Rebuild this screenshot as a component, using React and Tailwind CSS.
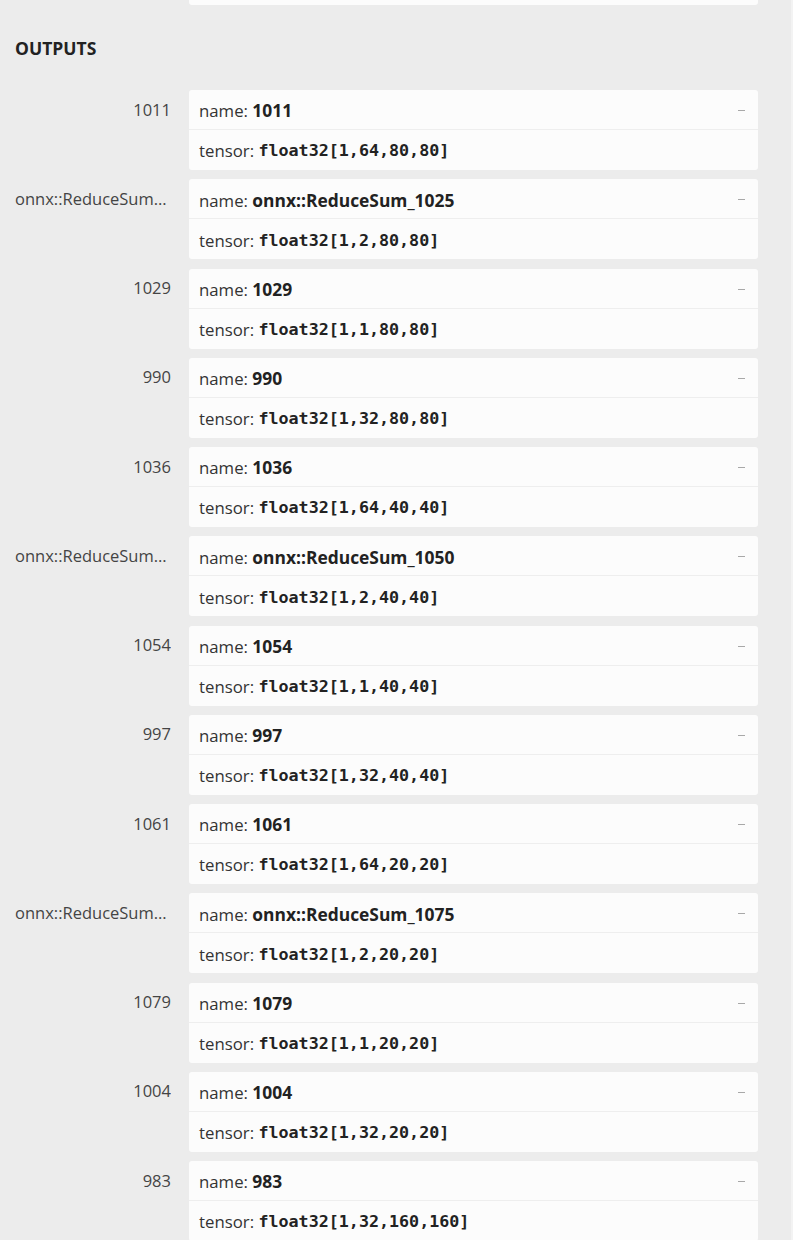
import React from 'react';

const outputs = [
  ['1011', '1011', 'float32[1,64,80,80]'],
  ['onnx::ReduceSum_1025', 'onnx::ReduceSum_1025', 'float32[1,2,80,80]'],
  ['1029', '1029', 'float32[1,1,80,80]'],
  ['990', '990', 'float32[1,32,80,80]'],
  ['1036', '1036', 'float32[1,64,40,40]'],
  ['onnx::ReduceSum_1050', 'onnx::ReduceSum_1050', 'float32[1,2,40,40]'],
  ['1054', '1054', 'float32[1,1,40,40]'],
  ['997', '997', 'float32[1,32,40,40]'],
  ['1061', '1061', 'float32[1,64,20,20]'],
  ['onnx::ReduceSum_1075', 'onnx::ReduceSum_1075', 'float32[1,2,20,20]'],
  ['1079', '1079', 'float32[1,1,20,20]'],
  ['1004', '1004', 'float32[1,32,20,20]'],
  ['983', '983', 'float32[1,32,160,160]'],
];

const sans = { fontFamily: '"Open Sans", "Noto Sans", sans-serif' };

function OutputRow({ label, name, tensor }) {
  return (
    <div className="flex items-start mb-[9.25px]">
      <div className="w-[156px] shrink-0 pl-[15px] h-10 flex items-center justify-end text-[16.5px] text-[#444] box-content">
        <span className="truncate block text-right">{label}</span>
      </div>
      <div className="ml-[18px] w-[569px] bg-[#fcfcfc] rounded-[3px] overflow-hidden">
        <div className="h-10 flex items-center justify-between pl-[10px] pr-[13px] pt-[2px] border-b border-[#eeeeee] text-[16.8px] text-[#333]">
          <div>
            name: <b className="text-[#222] font-bold text-[17.4px]">{name}</b>
          </div>
          <div className="w-[7px] h-px bg-[#a8a8a8]" />
        </div>
        <div className="h-10 flex items-center pl-[10px] pt-[2px] text-[16.8px] text-[#333]">
          tensor:&nbsp;
          <span className="font-bold text-[#222] text-[16.7px]" style={{ fontFamily: '"DejaVu Sans Mono", monospace' }}>
            {tensor}
          </span>
        </div>
      </div>
    </div>
  );
}

export default function App() {
  return (
    <div className="w-[793px] h-[1240px] overflow-hidden bg-[#ececec] flex" style={sans}>
      <div className="w-[791px]">
        <div className="ml-[189px] w-[569px] h-[5px] bg-[#fcfcfc] rounded-b-[3px]" />
        <div className="pl-[15px] pt-[30px] h-[85px] text-[17.5px] font-bold text-[#222]">OUTPUTS</div>
        <div>
          {outputs.map(([label, name, tensor]) => (
            <OutputRow key={name} label={label} name={name} tensor={tensor} />
          ))}
        </div>
      </div>
      <div className="w-[2px] bg-[#f3f3f3]" />
    </div>
  );
}
